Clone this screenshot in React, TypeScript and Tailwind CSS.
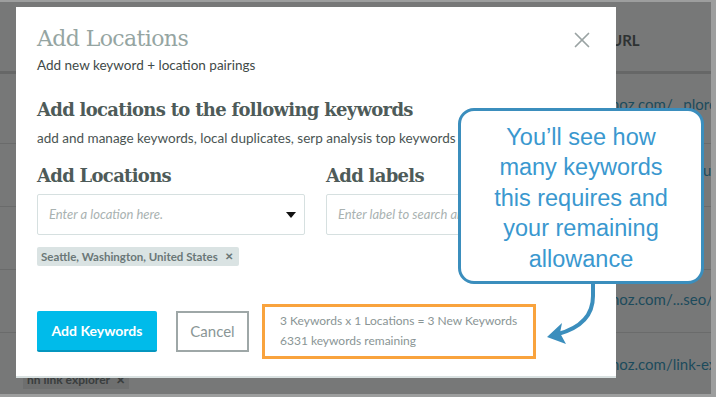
import { X } from 'lucide-react';

const rows = [
  { url: 'moz.com/...plorer', tag: '', cls: 'h-[70px] pt-[20px] border-b' },
  { url: 'moz.com/...setup', tag: '', cls: 'h-[63px] pt-[16px] border-b' },
  { url: 'moz.com/...na', tag: '', cls: 'h-[63px] pt-[17px] border-b' },
  { url: 'moz.com/...seo/on-page', tag: '', cls: 'h-[63px] pt-[19px] border-b' },
  { url: 'moz.com/link-explorer', tag: 'hh link explorer', cls: 'flex-1 pt-[21px]' },
];

function Background() {
  return (
    <div className="flex h-full flex-col bg-[#777878] font-['Lato',sans-serif]">
      <div className="flex h-[72px] items-center border-b-[3px] border-[#666767] pl-[611px] pt-[8px]">
        <span className="text-[15px] font-bold text-[#2e3232]">URL</span>
      </div>
      {rows.map((r, i) => (
        <div
          key={i}
          className={`relative border-[#6a6b6b] pl-[607px] text-[15px] leading-[20px] text-[#1c4b5c] ${r.cls}`}
        >
          <span className="whitespace-nowrap">{r.url}</span>
          {r.tag && (
            <span className="absolute left-[23px] top-[38px] flex h-[18px] items-center gap-[6px] bg-[#6e6f6f] px-[4px] text-[12px] leading-[18px] font-bold text-[#3a3e3e]">
              {r.tag} <span className="text-[11px]">✕</span>
            </span>
          )}
        </div>
      ))}
    </div>
  );
}

function Modal() {
  return (
    <div className="absolute left-[16px] top-[5px] h-[371px] w-[600px] border-b-[2px] border-[#d9e1e1] bg-white pl-[21px] font-['Lato',sans-serif]">
      <button className="absolute right-[21px] top-[20px] text-[#9aa3a3]">
        <X size={26} strokeWidth={1.6} />
      </button>
      <h1 className="pt-[16px] font-['DejaVu_Serif',serif] text-[22px] leading-[32px] font-light tracking-[-0.6px] text-[#95a5a2]">
        Add Locations
      </h1>
      <p className="mt-[1px] text-[13.5px] leading-[18px] text-[#3f4a48]">Add new keyword + location pairings</p>
      <h2 className="mt-[23px] font-['DejaVu_Serif',serif] text-[18px] leading-[26px] font-bold tracking-[-0.7px] text-[#4e5b59]">
        Add locations to the following keywords
      </h2>
      <p className="mt-[6px] whitespace-nowrap text-[13.5px] leading-[18px] text-[#4a5452]">
        add and manage keywords, local duplicates, serp analysis top keywords
      </p>
      <div className="mt-[17px] flex gap-[21px]">
        <div className="w-[268px]">
          <h3 className="font-['DejaVu_Serif',serif] text-[18px] leading-[24px] font-bold tracking-[-0.7px] text-[#4e5b59]">
            Add Locations
          </h3>
          <div className="mt-[6px] flex h-[41px] items-center justify-between rounded-[2px] border border-[#d6e0e0] pl-[11px] pr-[8px]">
            <span className="text-[13px] italic text-[#a9b2b1]">Enter a location here.</span>
            <span className="h-0 w-0 border-x-[5px] border-t-[6px] border-x-transparent border-t-[#111]" />
          </div>
          <div className="mt-[12px] inline-flex h-[19px] items-center gap-[7px] rounded-[2px] bg-[#dae3e3] pl-[4px] pr-[6px] text-[11.5px] font-bold text-[#6a7777]">
            Seattle, Washington, United States <span className="text-[10px]">✕</span>
          </div>
        </div>
        <div className="w-[268px]">
          <h3 className="font-['DejaVu_Serif',serif] text-[18px] leading-[24px] font-bold tracking-[-0.7px] text-[#4e5b59]">
            Add labels
          </h3>
          <div className="mt-[6px] flex h-[41px] items-center rounded-[2px] border border-[#d6e0e0] pl-[11px]">
            <span className="whitespace-nowrap text-[13px] italic text-[#a9b2b1]">Enter label to search and add</span>
          </div>
        </div>
      </div>
      <div className="mt-[37px] flex items-center">
        <button className="h-[41px] w-[120px] rounded-[2px] border-b-[2px] border-[#0496bf] bg-[#00bbea] text-[14px] font-bold text-white">
          Add Keywords
        </button>
        <button className="ml-[19px] h-[41px] w-[73px] border-[2px] border-[#9ea7a7] text-[15px] text-[#8a9696]">
          Cancel
        </button>
        <div className="ml-[13px] flex h-[55px] w-[274px] flex-col justify-center border-[3px] border-[#f9a33d] pl-[15px] text-[12px] leading-[20px] text-[#8a9595]">
          <span>3 Keywords x 1 Locations = 3 New Keywords</span>
          <span>6331 keywords remaining</span>
        </div>
      </div>
    </div>
  );
}

function Callout() {
  return (
    <>
      <div className="absolute left-[458px] top-[106px] flex h-[176px] w-[246px] items-center justify-center rounded-[16px] border-[3px] border-[#3b8ebd] bg-white pt-[4px]">
        <p className="text-center font-['Liberation_Sans',sans-serif] text-[23.5px] leading-[30.5px] text-[#3a98cf]">
          You’ll see how
          <br />
          many keywords
          <br />
          this requires and
          <br />
          your remaining
          <br />
          allowance
        </p>
      </div>
      <svg className="absolute left-[540px] top-[280px]" width="70" height="70" viewBox="0 0 70 70">
        <path d="M53 1 L53 14 C53 34 40 46 18 52" fill="none" stroke="#3b8ebd" strokeWidth="4" />
        <path d="M7 55 L22 41 L20 51 L26 62 Z" fill="#3b8ebd" />
      </svg>
    </>
  );
}

export default function App() {
  return (
    <div className="relative h-[397px] w-[716px] overflow-hidden border-t-[2px] border-r-[5px] border-b-[3px] border-[#9d9e9e] bg-[#777878]">
      <Background />
      <Modal />
      <Callout />
    </div>
  );
}
